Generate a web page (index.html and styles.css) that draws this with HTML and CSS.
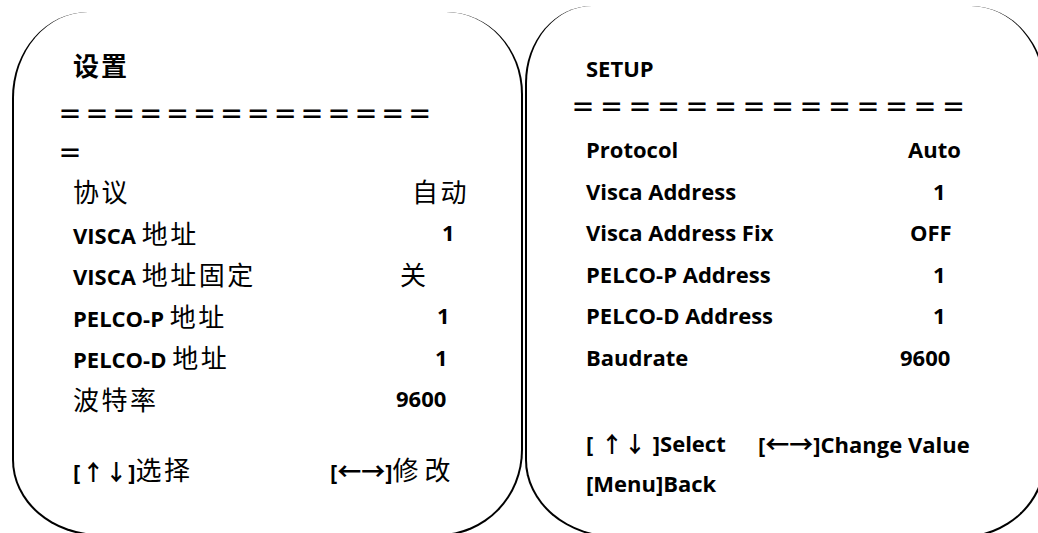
FILE: index.html
```html
<!DOCTYPE html>
<html lang="zh-CN">
<head>
<meta charset="utf-8">
<title>设置 / SETUP</title>
<link rel="stylesheet" href="styles.css">
</head>
<body>
<div class="stage">
  <section class="panel panel-cn">
    <div class="title"><span class="cjk cjk-bold">设置</span></div>
    <div class="eq eq-cn eq-first">＝＝＝＝＝＝＝＝＝＝＝＝＝＝</div>
    <div class="eq eq-cn">＝</div>
    <div class="rows rows-cn">
      <div class="row"><span class="label"><span class="cjk">协议</span></span><span class="val cn-auto"><span class="cjk">自动</span></span></div>
      <div class="row"><span class="label">VISCA <span class="cjk">地址</span></span><span class="val cn-visca">1</span></div>
      <div class="row"><span class="label">VISCA <span class="cjk">地址固定</span></span><span class="val cn-fix"><span class="cjk">关</span></span></div>
      <div class="row"><span class="label">PELCO-P <span class="cjk">地址</span></span><span class="val cn-p">1</span></div>
      <div class="row"><span class="label">PELCO-D <span class="cjk">地址</span></span><span class="val cn-d">1</span></div>
      <div class="row"><span class="label"><span class="cjk">波特率</span></span><span class="val cn-baud">9600</span></div>
    </div>
    <div class="foot foot-cn">
      <span class="hint hint-cn">[<span class="arrow arrow-v">↑↓</span>]<span class="cjk">选择</span></span>
      <span class="hint">[<span class="arrow arrow-h">←→</span>]<span class="cjk cjk-wide">修改</span></span>
    </div>
  </section>

  <section class="panel panel-en">
    <div class="title title-en">SETUP</div>
    <div class="eq eq-en">＝＝＝＝＝＝＝＝＝＝＝＝＝＝</div>
    <div class="rows rows-en">
      <div class="row"><span class="label">Protocol</span><span class="val en-auto">Auto</span></div>
      <div class="row"><span class="label">Visca Address</span><span class="val en-one">1</span></div>
      <div class="row"><span class="label">Visca Address Fix</span><span class="val en-off">OFF</span></div>
      <div class="row"><span class="label">PELCO-P Address</span><span class="val en-one">1</span></div>
      <div class="row"><span class="label">PELCO-D Address</span><span class="val en-one">1</span></div>
      <div class="row"><span class="label">Baudrate</span><span class="val en-baud">9600</span></div>
    </div>
    <div class="foot foot-en">
      <div class="foot-line">
        <span class="hint hint-en">[ <span class="arrow arrow-v">↑↓</span> ]Select</span>
        <span class="hint">[<span class="arrow arrow-h">←→</span>]Change Value</span>
      </div>
      <div class="foot-line">[Menu]Back</div>
    </div>
  </section>
</div>
</body>
</html>
```

FILE: styles.css
```css
html, body {
  margin: 0;
  padding: 0;
  background: #fff;
}

body {
  width: 1038px;
  height: 533px;
  overflow: hidden;
  color: #000;
  font-family: "Open Sans", "Noto Sans CJK SC", sans-serif;
  font-weight: 700;
  font-size: 22px;
}

.stage {
  display: flex;
  align-items: flex-start;
  width: 1038px;
  height: 533px;
  overflow: hidden;
}

.panel {
  flex-shrink: 0;
  box-sizing: border-box;
  border: 2px solid #000;
  border-top: 0;
  display: flex;
  flex-direction: column;
}

.panel-cn {
  margin: 12px 0 0 12px;
  width: 511px;
  height: 524px;
  padding: 32px 0 0 59px;
  border-radius: 76px 77px 84px 88px / 86px 82px 86px 76px;
}

.panel-en {
  margin: 6px 0 0 2px;
  width: 521px;
  height: 532px;
  padding: 44px 0 0 59px;
  border-radius: 67px 75px 85px 92px / 77px 85px 80px 78px;
}

.cjk {
  font-family: "Noto Sans CJK SC", sans-serif;
  font-weight: 400;
  font-size: 26px;
  letter-spacing: 2.5px;
}

.cjk-bold {
  font-weight: 700;
  letter-spacing: 2px;
}

.cjk-wide {
  letter-spacing: 6px;
}

.title {
  height: 40px;
  display: flex;
  align-items: center;
}

.title-en {
  height: 36px;
}

.eq {
  height: 39px;
  display: flex;
  align-items: center;
  font-family: "Noto Sans CJK SC", sans-serif;
  font-weight: 700;
  font-size: 24px;
  white-space: nowrap;
}

.eq-cn {
  margin-left: -15px;
  letter-spacing: 2.9px;
}

.eq-first {
  margin-top: 9px;
}

.eq-en {
  margin-left: -15px;
  letter-spacing: 4.5px;
}

.rows {
  display: flex;
  flex-direction: column;
}

.rows-cn {
  margin-top: -1px;
}

.rows-en {
  margin-top: 3.5px;
}

.row {
  display: flex;
  align-items: center;
  height: 41.5px;
  white-space: nowrap;
}

.rows-cn .label {
  width: 324px;
  flex-shrink: 0;
}

.rows-en .label {
  width: 315px;
  flex-shrink: 0;
}

.cn-auto { margin-left: 15px; }
.cn-visca { margin-left: 45px; }
.cn-fix { margin-left: 3px; }
.cn-p { margin-left: 40px; }
.cn-d { margin-left: 38px; }
.cn-baud { margin-left: -1px; }

.en-auto { margin-left: 7px; }
.en-one { margin-left: 32px; }
.en-off { margin-left: 9px; }
.en-baud { margin-left: -1px; }

.arrow {
  font-family: "Noto Sans CJK SC", sans-serif;
  font-weight: 700;
}

.arrow-v {
  font-size: 22px;
  letter-spacing: 1px;
  margin-left: 2px;
}

.arrow-h {
  font-size: 24px;
}

.foot {
  display: flex;
  white-space: nowrap;
}

.foot-cn {
  margin-top: 29px;
  height: 41px;
  align-items: center;
}

.hint-cn {
  width: 257px;
  flex-shrink: 0;
}

.foot-en {
  margin-top: 44px;
  flex-direction: column;
}

.foot-line {
  height: 41px;
  display: flex;
  align-items: center;
}

.hint-en {
  width: 172px;
  flex-shrink: 0;
}
```
